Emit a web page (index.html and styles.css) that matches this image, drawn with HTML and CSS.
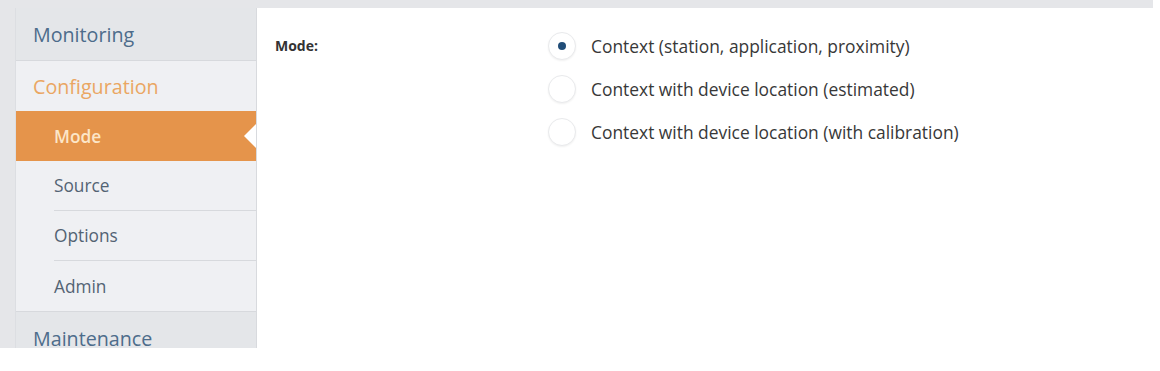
FILE: index.html
```html
<!DOCTYPE html>
<html lang="en">
<head>
  <meta charset="UTF-8" />
  <title>Configuration – Mode</title>
  <link rel="stylesheet" href="styles.css">
</head>
<body>
  <div class="app">
    <aside class="sidebar">
      <a class="menu-item" href="#">Monitoring</a>
      <a class="menu-item open" href="#">Configuration</a>
      <div class="submenu">
        <a class="sub-item active" href="#">Mode</a>
        <a class="sub-item" href="#">Source</a>
        <a class="sub-item" href="#">Options</a>
        <a class="sub-item" href="#">Admin</a>
      </div>
      <a class="menu-item" href="#">Maintenance</a>
    </aside>

    <main class="content">
      <div class="field">
        <div class="field-label">Mode:</div>
        <div class="options">
          <label class="option">
            <span class="radio checked"></span>
            <span>Context (station, application, proximity)</span>
          </label>
          <label class="option">
            <span class="radio"></span>
            <span>Context with device location (estimated)</span>
          </label>
          <label class="option">
            <span class="radio"></span>
            <span>Context with device location (with calibration)</span>
          </label>
        </div>
      </div>
    </main>
  </div>
</body>
</html>
```

FILE: styles.css
```css
body {
  margin: 0;
  font-family: 'Open Sans', 'DejaVu Sans', sans-serif;
  background-color: #fff;
  color: #333;
}

.app {
  width: 1153px;
  height: 348px;
  background-color: #e5e6e9;
  padding: 8px 0 0 15px;
  box-sizing: border-box;
  display: flex;
  overflow: hidden;
}

/* Seitenmenue */
.sidebar {
  width: 242px;
  flex-shrink: 0;
  box-sizing: border-box;
  border-right: 1px solid #d8dade;
  border-left: 1px solid #dcdee2;
  display: flex;
  flex-direction: column;
}

.menu-item {
  height: 52px;
  display: flex;
  align-items: center;
  padding-left: 17px;
  font-size: 19.7px;
  color: #4d6c8b;
  text-decoration: none;
  background-color: #e4e6e9;
  border-bottom: 1px solid #d7d9dd;
  flex-shrink: 0;
}

.menu-item.open {
  background-color: #eff0f3;
  color: #eaa662;
  height: 50px;
  border-bottom: none;
}

.submenu {
  background-color: #eff0f3;
  border-bottom: 1px solid #d7d9dd;
}

.sub-item {
  position: relative;
  height: 50px;
  display: flex;
  align-items: center;
  margin-left: 38px;
  font-size: 17.3px;
  color: #536373;
  text-decoration: none;
  border-bottom: 1px solid #d7d9dd;
  box-sizing: border-box;
}

.sub-item:last-child {
  border-bottom: none;
}

.sub-item.active {
  margin-left: 0;
  padding-left: 38px;
  background-color: #e5944b;
  color: #fce6c8;
  font-weight: 600;
  border-bottom: none;
}

.sub-item.active::after {
  content: '';
  position: absolute;
  right: 0;
  top: 50%;
  margin-top: -12px;
  border-top: 12px solid transparent;
  border-bottom: 12px solid transparent;
  border-right: 12px solid #fff;
}

/* Inhalt */
.content {
  flex: 1;
  background-color: #fff;
  padding: 16px 0 0 18px;
}

.field {
  display: flex;
}

.field-label {
  width: 273px;
  height: 43px;
  display: flex;
  align-items: center;
  font-size: 14px;
  font-weight: 700;
  color: #333;
}

.options {
  display: flex;
  flex-direction: column;
}

.option {
  height: 43px;
  display: flex;
  align-items: center;
  gap: 15px;
  font-size: 17.4px;
  color: #383838;
  cursor: pointer;
}

.radio {
  width: 28px;
  height: 28px;
  border-radius: 50%;
  border: 1px solid #e9eaec;
  box-shadow: 0 1px 2px rgba(0,0,0,0.06);
  background-color: #fff;
  box-sizing: border-box;
  display: flex;
  align-items: center;
  justify-content: center;
}

.radio.checked::before {
  content: '';
  width: 8px;
  height: 8px;
  border-radius: 50%;
  background-color: #214d78;
}
```
